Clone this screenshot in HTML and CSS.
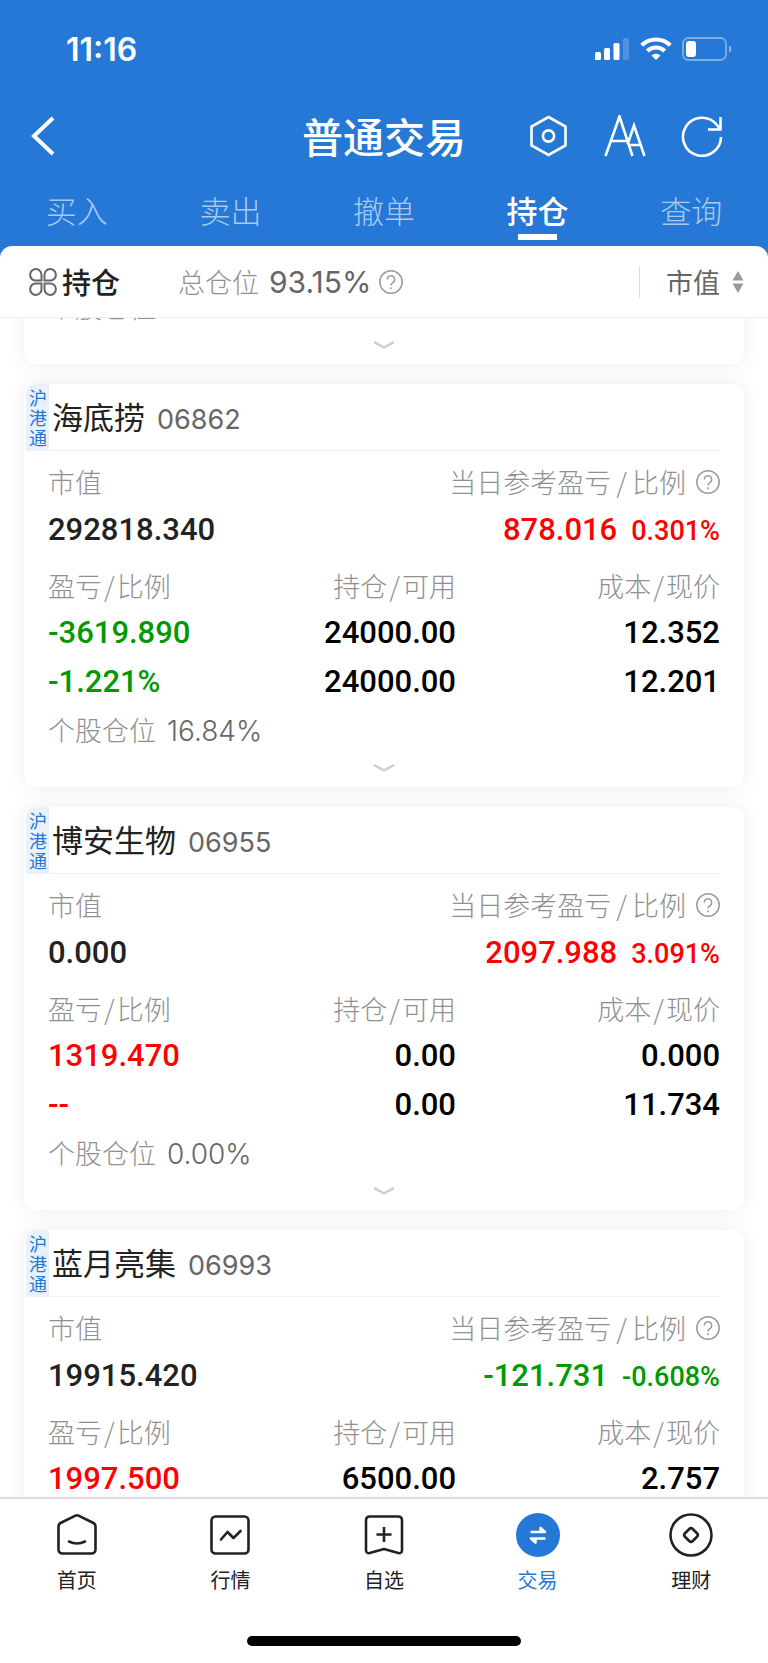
FILE: index.html
```html
<!DOCTYPE html>
<html lang="zh-CN">
<head>
<meta charset="utf-8">
<meta name="viewport" content="width=device-width, initial-scale=1">
<title>普通交易</title>
<link rel="stylesheet" href="styles.css">
</head>
<body>
<svg class="defs" aria-hidden="true">
  <symbol id="help" viewBox="0 0 24 24"><circle cx="12" cy="12" r="11.2"/><path d="M8.3 9.4a3.700 3.700 0 1 1 5.600 3.200c-1.300.8-1.900 1.400-1.900 2.900"/><path d="M12 17.300v1.900"/></symbol>
  <symbol id="more" viewBox="0 0 22 10"><path d="M1 2l10 5.500L21 2"/></symbol>
</svg>
<div class="app">
  <header class="top">
    <div class="status">
      <span class="clock">11:16</span>
      <svg class="signals" viewBox="0 0 138 26" aria-hidden="true">
        <g fill="#fff">
          <rect x="0" y="16" width="6" height="8" rx="1.5"/>
          <rect x="9" y="12" width="6" height="12" rx="1.5"/>
          <rect x="18.500" y="7" width="6" height="17" rx="1.5"/>
          <rect x="28" y="2" width="6" height="22" rx="1.5" opacity=".2"/>
          <path d="M61 24l-4.500-4.500a6.500 6.500 0 0 1 9 0z"/>
        </g>
        <path d="M46.700 9.300a20.500 20.500 0 0 1 28.600 0" fill="none" stroke="#fff" stroke-width="4.200"/>
        <path d="M52.300 15a12.600 12.600 0 0 1 17.400 0" fill="none" stroke="#fff" stroke-width="4.200"/>
        <rect x="88" y="2" width="43" height="22" rx="5.500" fill="none" stroke="#fff" stroke-opacity=".4" stroke-width="1.800"/>
        <rect x="91" y="5" width="10" height="16" rx="3" fill="#fff"/>
        <path d="M134 9.500c3.200 1 3.200 6 0 7z" fill="#fff" opacity=".45"/>
      </svg>
    </div>
    <div class="nav">
      <button class="back" aria-label="返回"><svg viewBox="0 0 24 40"><path d="M22 2L3 20l19 18"/></svg></button>
      <h1>普通交易</h1>
      <div class="actions">
        <button aria-label="设置"><svg viewBox="0 0 42 42"><path d="M21.500 2L38.500 11.500v19L21.500 40 4.500 30.500v-19z"/><circle cx="21.500" cy="21" r="5.600"/></svg></button>
        <button aria-label="字号"><svg viewBox="0 0 42 42"><path d="M1.500 41L15.500 1.500 28.500 41M6.500 26H23.500M23.500 29.500L30 10.500 40.500 41M25 30h12"/></svg></button>
        <button aria-label="刷新"><svg viewBox="0 0 42 42"><path d="M40 22a19 19 0 1 1-4.500-12.500L39 14M39.500 2v12.500H27"/></svg></button>
      </div>
    </div>
    <nav class="tabs">
      <a href="#">买入</a><a href="#">卖出</a><a href="#">撤单</a><a href="#" class="on" aria-current="page">持仓</a><a href="#">查询</a>
    </nav>
  </header>

  <div class="summary">
    <svg class="clover" viewBox="0 0 28 28" aria-hidden="true"><path d="M12.500 12.500H7A5.700 5.700 0 1 1 12.500 7zM15.500 12.500V7A5.700 5.700 0 1 1 21 12.500zM12.500 15.500V21A5.700 5.700 0 1 1 7 15.500zM15.500 15.500H21A5.700 5.700 0 1 1 15.500 21z"/></svg>
    <h2>持仓</h2>
    <span class="total">总仓位</span>
    <span class="total-num">93.15%</span>
    <button class="help" aria-label="总仓位说明"><svg><use href="#help"/></svg></button>
    <button class="sort"><span>市值</span><svg viewBox="0 0 12 24"><path d="M6 1l5.500 9.500H.5zM6 23l5.500-9.500H.5z"/></svg></button>
  </div>

  <main class="list">
    <article class="card first">
      <p class="share">个股仓位</p>
      <button class="more" aria-label="展开"><svg><use href="#more"/></svg></button>
    </article>

    <article class="card">
      <div class="head"><span class="tag">沪港通</span><h3>海底捞<span class="code">06862</span></h3></div>
      <div class="body">
        <dl class="pair">
          <div><dt>市值</dt><dd>292818.340</dd></div>
          <div><dt>当日参考盈亏<i>/</i>比例<button class="help" aria-label="当日参考盈亏说明"><svg><use href="#help"/></svg></button></dt><dd class="up">878.016<small>0.301%</small></dd></div>
        </dl>
        <dl class="trio">
          <div><dt>盈亏<i>/</i>比例</dt><dd class="down">-3619.890</dd><dd class="down">-1.221%</dd></div>
          <div><dt>持仓<i>/</i>可用</dt><dd>24000.00</dd><dd>24000.00</dd></div>
          <div><dt>成本<i>/</i>现价</dt><dd>12.352</dd><dd>12.201</dd></div>
        </dl>
      </div>
      <p class="share">个股仓位<span>16.84%</span></p>
      <button class="more" aria-label="展开"><svg><use href="#more"/></svg></button>
    </article>

    <article class="card">
      <div class="head"><span class="tag">沪港通</span><h3>博安生物<span class="code">06955</span></h3></div>
      <div class="body">
        <dl class="pair">
          <div><dt>市值</dt><dd>0.000</dd></div>
          <div><dt>当日参考盈亏<i>/</i>比例<button class="help" aria-label="当日参考盈亏说明"><svg><use href="#help"/></svg></button></dt><dd class="up">2097.988<small>3.091%</small></dd></div>
        </dl>
        <dl class="trio">
          <div><dt>盈亏<i>/</i>比例</dt><dd class="up">1319.470</dd><dd class="up">--</dd></div>
          <div><dt>持仓<i>/</i>可用</dt><dd>0.00</dd><dd>0.00</dd></div>
          <div><dt>成本<i>/</i>现价</dt><dd>0.000</dd><dd>11.734</dd></div>
        </dl>
      </div>
      <p class="share">个股仓位<span>0.00%</span></p>
      <button class="more" aria-label="展开"><svg><use href="#more"/></svg></button>
    </article>

    <article class="card last">
      <div class="head"><span class="tag">沪港通</span><h3>蓝月亮集<span class="code">06993</span></h3></div>
      <div class="body">
        <dl class="pair">
          <div><dt>市值</dt><dd>19915.420</dd></div>
          <div><dt>当日参考盈亏<i>/</i>比例<button class="help" aria-label="当日参考盈亏说明"><svg><use href="#help"/></svg></button></dt><dd class="down">-121.731<small>-0.608%</small></dd></div>
        </dl>
        <dl class="trio">
          <div><dt>盈亏<i>/</i>比例</dt><dd class="up">1997.500</dd></div>
          <div><dt>持仓<i>/</i>可用</dt><dd>6500.00</dd></div>
          <div><dt>成本<i>/</i>现价</dt><dd>2.757</dd></div>
        </dl>
      </div>
    </article>
  </main>

  <footer class="bottom">
    <nav class="menu">
      <a href="#"><svg viewBox="0 0 46 46"><path d="M21.500 3.600a3.500 3.500 0 0 1 3 0L39.500 11a4 4 0 0 1 2 3.500V37.500a4 4 0 0 1-4 4H8.500a4 4 0 0 1-4-4V14.500a4 4 0 0 1 2-3.500z"/><path d="M15 29.500q8 4 16 0" stroke-linecap="round"/></svg>首页</a>
      <a href="#"><svg viewBox="0 0 46 46"><rect x="4.500" y="4.500" width="37" height="37" rx="4"/><path d="M14 27.500l6.500-7.500 6 6 7-7" stroke-linecap="round"/></svg>行情</a>
      <a href="#"><svg viewBox="0 0 46 46"><path d="M8.500 4.500h29a3.500 3.500 0 0 1 3.500 3.500V38.500a2.800 2.800 0 0 1-3.700 2.600L23 37 8.700 41.100A2.800 2.800 0 0 1 5 38.500V8a3.500 3.500 0 0 1 3.500-3.500z"/><path d="M23 15v15M15.500 22.500h15"/></svg>自选</a>
      <a href="#" class="on" aria-current="page"><svg viewBox="0 0 46 46"><circle cx="23" cy="23" r="22" fill="#2578d6" stroke="none"/><path d="M15.500 20h14.500l-4.500-4v3M30.500 26.500H16l4.500 4v-3" stroke="#fff"/></svg>交易</a>
      <a href="#"><svg viewBox="0 0 46 46"><circle cx="23" cy="23" r="20.500"/><rect x="17.500" y="17.500" width="11" height="11" rx="2.500" transform="rotate(45 23 23)"/></svg>理财</a>
    </nav>
    <div class="home-bar"></div>
  </footer>
</div>
</body>
</html>
```
FILE: styles.css
```css
* { box-sizing: border-box; margin: 0; padding: 0; }
body { background: #fff; color: #222; font-family: "Noto Sans CJK SC", sans-serif; font-size: 27px; }
button { border: 0; background: none; color: inherit; font: inherit; cursor: pointer; }
a { color: inherit; text-decoration: none; }
svg { display: block; fill: none; }
.defs { position: absolute; width: 0; height: 0; }
.app { display: flex; flex-direction: column; height: 100vh; overflow: hidden; background: linear-gradient(#2578d6 300px, #fff 300px); }

.top { flex: none; color: #fff; }
.status { display: flex; align-items: center; justify-content: space-between; height: 98px; padding: 0 34px 0 66px; }
.clock { font: 600 32px Inter, sans-serif; }
.signals { width: 140px; height: 26px; }
.nav { display: grid; grid-template-columns: 1fr auto 1fr; align-items: center; height: 76px; padding: 0 45px 0 31px; }
.nav svg { stroke: #fff; stroke-width: 2.6; }
.nav h1 { padding: 0 0 3px 14px; font-size: 41px; font-weight: 500; line-height: 56px; }
.back { justify-self: start; }
.back svg { width: 24px; height: 40px; stroke-width: 4; }
.actions { display: flex; justify-content: flex-end; gap: 35px; }
.actions svg { width: 42px; height: 42px; }
.tabs { display: grid; grid-template-columns: repeat(5, 1fr); height: 72px; padding-top: 14px; font-size: 31px; font-weight: 300; line-height: 44px; text-align: center; }
.tabs a { color: #a8caf0; }
.tabs .on { color: #fff; font-weight: 500; }
.tabs .on::after { content: ""; display: block; width: 39px; height: 6px; margin: 2px auto 0; background: #fff; }

.summary { flex: none; display: flex; align-items: center; height: 72px; padding: 0 24px 0 29px; background: #fff; border-bottom: 1px solid #f0f0f0; border-radius: 12px 12px 0 0; }
.clover { width: 28px; height: 28px; stroke: #666; stroke-width: 2; }
.summary h2 { margin-left: 5px; padding-bottom: 2px; font-size: 29px; font-weight: 500; }
.total { margin-left: 58px; color: #909090; font-weight: 300; }
.total-num { margin: 0 8px 0 10px; color: #666; font-family: Inter, sans-serif; font-size: 30px; font-weight: 400; }
.help { display: block; flex: none; }
.help svg { width: 24px; height: 24px; stroke: #999; stroke-width: 1.5; }
.sort { display: flex; align-items: center; gap: 12px; margin-left: auto; padding-left: 26px; border-left: 1px solid #ddd; color: #666; line-height: 32px; }
.sort svg { width: 12px; height: 24px; fill: #999; }

.list { flex: 1; min-height: 0; overflow: hidden; padding: 0 24px; background: #fff; }
.card { margin-bottom: 20px; background: #fff; border-radius: 12px; box-shadow: 0 0 20px rgba(0, 0, 0, .08); }
.first { margin-top: -35px; }
.last { padding-bottom: 48px; }
.head { display: flex; height: 67px; padding: 0 24px 0 2px; }
.tag { width: 23px; padding: 3px 0 0 3px; border-top-left-radius: 10px; background: #e8f1fc; color: #2578d6; font-size: 18px; line-height: 20px; word-break: break-all; }
.head h3 { flex: 1; padding-left: 3px; border-bottom: 1px solid #f3f3f3; font-size: 31px; font-weight: 400; line-height: 64px; }
.code { margin-left: 12px; color: #666; font-family: Inter, sans-serif; font-size: 27px; }
.body { padding: 13px 24px 0; }
dt { display: flex; align-items: center; height: 36px; color: #909090; font-weight: 300; line-height: 34px; white-space: nowrap; }
dt i { margin: 0 2px; font-style: normal; }
dt .help { margin-left: 10px; }
dd { height: 49px; font: 500 31px/49px Roboto, sans-serif; color: #000; white-space: nowrap; }
.pair { display: flex; justify-content: space-between; margin-bottom: 15px; }
.pair dt i { margin: 0 5px; }
.pair dd { margin-top: 5px; color: #222; }
.pair > :last-child { display: flex; flex-direction: column; align-items: flex-end; }
.pair small { margin-left: 14px; font-size: 27px; }
.trio { display: grid; grid-template-columns: 17fr 17fr 22fr; }
.trio dt { padding-bottom: 2px; margin-bottom: 3px; }
.trio > :not(:first-child) { display: flex; flex-direction: column; align-items: flex-end; }
.body .up { color: #f00; }
.body .down { color: #090; }
.share { height: 48px; padding-left: 24px; color: #909090; font-weight: 300; line-height: 47px; }
.share span { margin-left: 11px; color: #666; font-family: Inter, sans-serif; font-size: 28px; }
.more { display: block; width: 100%; height: 33px; padding-bottom: 6px; }
.more svg { width: 22px; height: 10px; margin: 0 auto; stroke: #ccc; stroke-width: 2.4; }

.bottom { flex: none; background: #fff; border-top: 2px solid #ddd; }
.menu { display: grid; grid-template-columns: repeat(5, 1fr); padding-top: 13px; font-size: 20px; line-height: 30px; text-align: center; }
.menu svg { width: 46px; height: 46px; margin: 0 auto 7px; stroke: #222; stroke-width: 2.6; stroke-linejoin: round; }
.menu .on { color: #2578d6; }
.home-bar { width: 274px; height: 10px; margin: 41px auto 17px; border-radius: 5px; background: #000; }
```
